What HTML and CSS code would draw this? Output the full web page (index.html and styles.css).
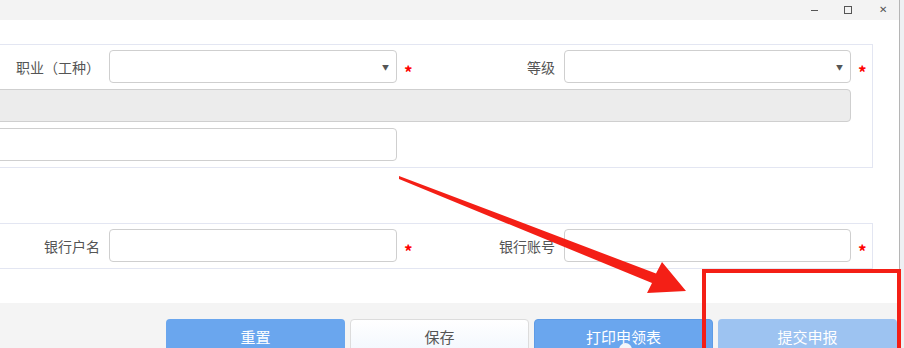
FILE: index.html
```html
<!DOCTYPE html>
<html lang="zh-CN">
<head>
  <meta charset="UTF-8" />
  <title>申报</title>
  <link rel="stylesheet" href="styles.css">
</head>
<body>
  <div class="window">
    <div class="titlebar">
      <span class="win-btn min"></span>
      <span class="win-btn max"></span>
      <span class="win-btn close">&#x2715;</span>
    </div>

    <div class="content">
      <section class="panel first">
        <div class="form-grid">
          <label class="label">职业（工种）</label>
          <div class="select"><span class="caret">&#9660;</span></div>
          <span class="req">*</span>
          <label class="label">等级</label>
          <div class="select"><span class="caret">&#9660;</span></div>
          <span class="req">*</span>

          <div class="input disabled wide"></div>
          <div class="input half"></div>
        </div>
      </section>

      <section class="panel second">
        <div class="form-grid">
          <label class="label">银行户名</label>
          <div class="input"></div>
          <span class="req">*</span>
          <label class="label">银行账号</label>
          <div class="input"></div>
          <span class="req">*</span>
        </div>
      </section>

      <div class="spacer"></div>

      <footer class="actions">
        <button class="btn primary">重置</button>
        <button class="btn plain">保存</button>
        <button class="btn primary dark">打印申领表</button>
        <button class="btn light">提交申报</button>
      </footer>
    </div>
  </div>
  <div class="edge"></div>

  <!-- annotation drawn on top of the screenshot -->
  <svg class="annotation" width="904" height="348" viewBox="0 0 904 348">
    <polygon points="399,176 656,273.5 662,262 686,291 647,293 652,283 399,179" fill="#f41f16" />
    <rect x="704" y="271" width="195" height="100" fill="none" stroke="#f41f16" stroke-width="4" />
  </svg>
  <span class="cursor"></span>
</body>
</html>
```

FILE: styles.css
```css
* {
  margin: 0;
  padding: 0;
  box-sizing: border-box;
}

body {
  width: 904px;
  height: 348px;
  overflow: hidden;
  display: flex;
  background: #fff;
  font-family: "Noto Sans CJK SC", "Noto Sans", sans-serif;
  font-size: 14px;
  color: #555;
}

.window {
  width: 899px;
  height: 348px;
  display: flex;
  flex-direction: column;
}

.edge {
  width: 5px;
  background: #eef0f3;
  border-left: 1px solid #b5b5b5;
}

/* Title bar */
.titlebar {
  height: 20px;
  flex: none;
  background: #f3f3f3;
  display: flex;
  align-items: center;
  justify-content: flex-end;
  gap: 26px;
  padding-right: 11px;
}

.win-btn {
  width: 8px;
  height: 8px;
  color: #555;
}

.win-btn.min {
  height: 1px;
  width: 7px;
  background: #555;
}

.win-btn.max {
  border: 1px solid #555;
}

.win-btn.close {
  font-size: 10px;
  line-height: 8px;
  width: 10px;
  height: 10px;
  text-align: center;
}

/* Content */
.content {
  flex: 1;
  display: flex;
  flex-direction: column;
  padding-top: 24px;
}

.panel {
  width: 873px;
  border: 1px solid #e3e6f2;
  border-left: none;
  padding: 5px 0 6px;
}

.panel.second {
  margin-top: 55px;
}

.form-grid {
  display: grid;
  grid-template-columns: 109px 288px 58px 109px 287px 20px;
  grid-auto-rows: 33px;
  row-gap: 6px;
  align-items: center;
}

.label {
  text-align: right;
  padding-right: 9px;
  color: #555;
  white-space: nowrap;
}

.select,
.input {
  height: 33px;
  border: 1px solid #cfcfcf;
  border-radius: 4px;
  background: #fff;
}

.select {
  display: flex;
  align-items: center;
  justify-content: flex-end;
  padding-right: 7px;
}

.caret {
  font-size: 7px;
  color: #555;
}

.req {
  color: #f00;
  font-size: 17px;
  font-weight: bold;
  padding-left: 7px;
  padding-top: 9px;
}

.input.wide {
  grid-column: 1 / 6;
  margin-left: -10px;
}

.input.half {
  grid-column: 1 / 3;
  margin-left: -10px;
}

.input.disabled {
  background: #ececec;
}

.spacer {
  height: 34px;
  flex: none;
}

/* Footer buttons */
.actions {
  flex: 1;
  background: #f4f4f4;
  display: flex;
  gap: 5px;
  padding: 16px 0 0 166px;
}

.btn {
  width: 179px;
  height: 34px;
  border-radius: 4px;
  border: 1px solid transparent;
  font-family: inherit;
  font-size: 15px;
  color: #fff;
}

.btn.primary {
  background: #6aa6ee;
}

.btn.primary.dark {
  border-color: #5e9be6;
}

.btn.plain {
  background: linear-gradient(#fff, #f2f7fd);
  border-color: #dcdcdc;
  color: #555;
}

.btn.light {
  background: #9dc3f1;
}

/* Overlays */
.annotation {
  position: absolute;
  top: 0;
  left: 0;
  pointer-events: none;
}

.cursor {
  position: absolute;
  left: 619px;
  top: 343px;
  width: 13px;
  height: 13px;
  border-radius: 50%;
  background: #f4f6fa;
}
```
